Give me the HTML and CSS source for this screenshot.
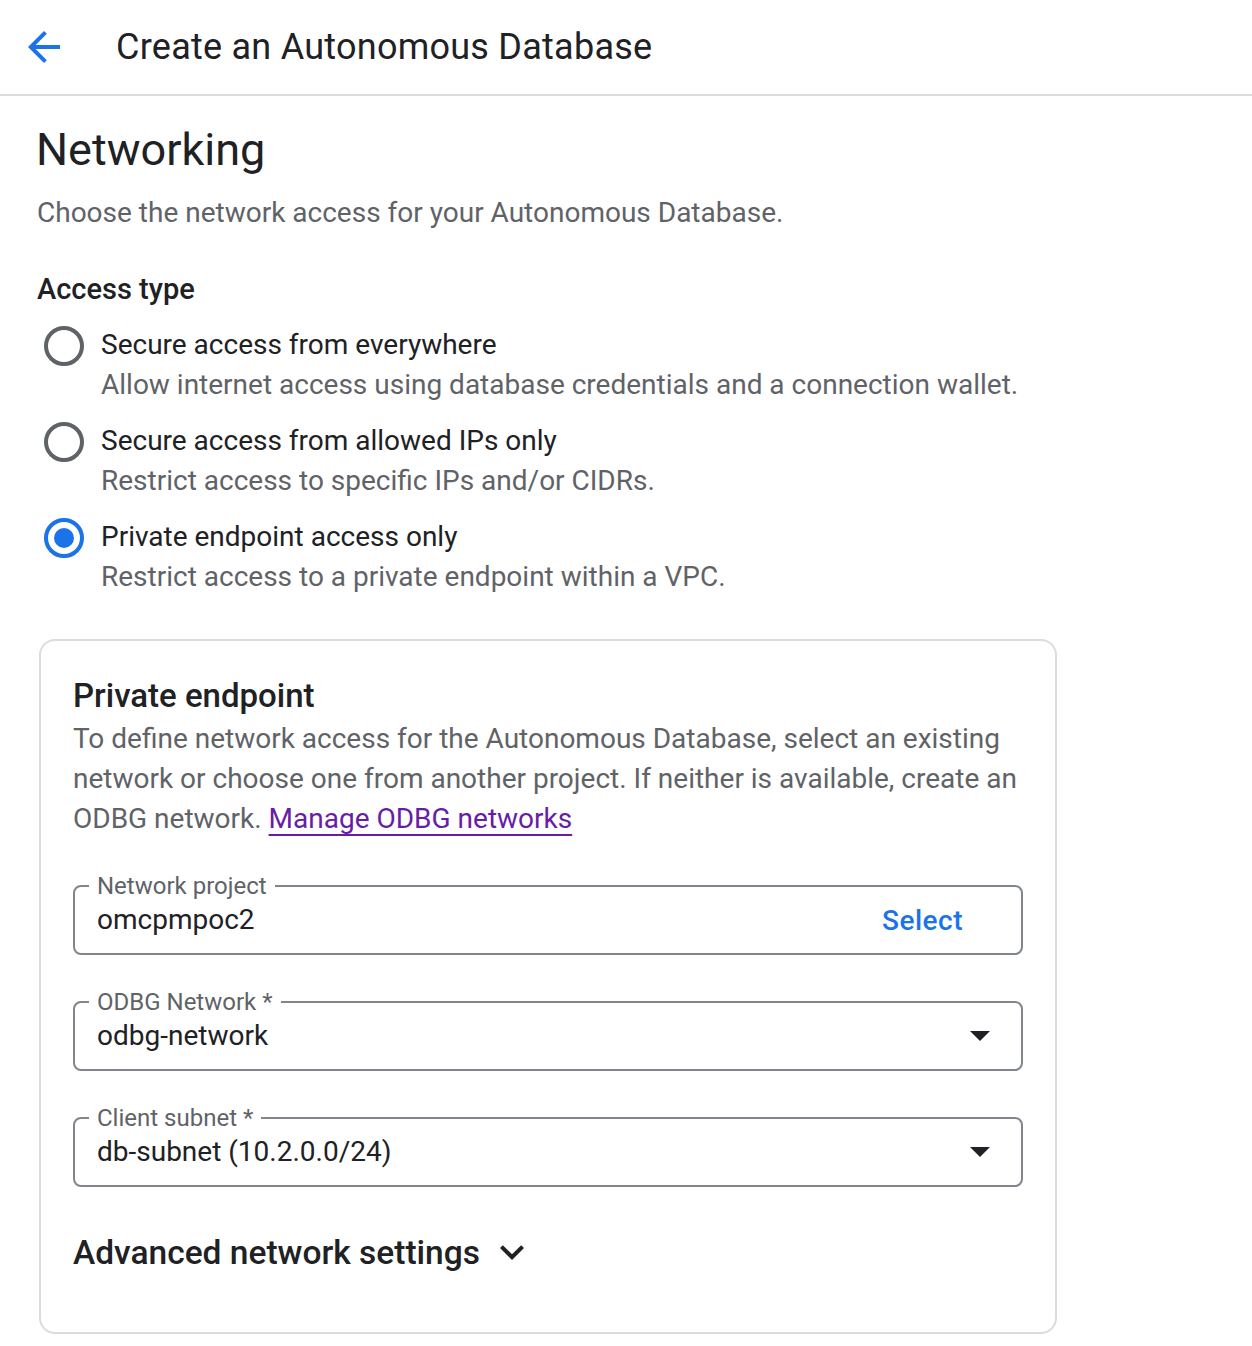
FILE: index.html
```html
<!DOCTYPE html>
<html lang="en">
<head>
<meta charset="utf-8">
<title>Create an Autonomous Database</title>
<link rel="stylesheet" href="styles.css">
</head>
<body>
<header class="topbar">
  <svg class="back" viewBox="0 0 24 24" width="48" height="48" aria-hidden="true"><path d="M20 11H7.83l5.59-5.59L12 4l-8 8 8 8 1.41-1.41L7.83 13H20v-2z"/></svg>
  <div class="page-title">Create an Autonomous Database</div>
</header>
<main class="main">
  <h1 class="section-title">Networking</h1>
  <p class="section-desc">Choose the network access for your Autonomous Database.</p>
  <div class="group-title">Access type</div>
  <div class="radios">
    <div class="option">
      <svg class="radio" viewBox="0 0 24 24" width="48" height="48"><circle cx="12" cy="12" r="9" fill="none" stroke="#5f6368" stroke-width="2"/></svg>
      <div class="option-text">
        <div class="option-label">Secure access from everywhere</div>
        <div class="option-desc">Allow internet access using database credentials and a connection wallet.</div>
      </div>
    </div>
    <div class="option">
      <svg class="radio" viewBox="0 0 24 24" width="48" height="48"><circle cx="12" cy="12" r="9" fill="none" stroke="#5f6368" stroke-width="2"/></svg>
      <div class="option-text">
        <div class="option-label">Secure access from allowed IPs only</div>
        <div class="option-desc">Restrict access to specific IPs and/or CIDRs.</div>
      </div>
    </div>
    <div class="option">
      <svg class="radio" viewBox="0 0 24 24" width="48" height="48"><circle cx="12" cy="12" r="9" fill="none" stroke="#1a73e8" stroke-width="2"/><circle cx="12" cy="12" r="5" fill="#1a73e8"/></svg>
      <div class="option-text">
        <div class="option-label">Private endpoint access only</div>
        <div class="option-desc">Restrict access to a private endpoint within a VPC.</div>
      </div>
    </div>
  </div>

  <section class="card">
    <h2 class="card-title">Private endpoint</h2>
    <p class="card-desc">To define network access for the Autonomous Database, select an existing network or choose one from another project. If neither is available, create an ODBG network. <a class="link" href="#">Manage ODBG networks</a></p>

    <fieldset class="field">
      <legend>Network project</legend>
      <div class="field-row">
        <span class="value">omcpmpoc2</span>
        <span class="select-btn">Select</span>
      </div>
    </fieldset>

    <fieldset class="field">
      <legend>ODBG Network *</legend>
      <div class="field-row">
        <span class="value">odbg-network</span>
        <svg class="caret" viewBox="0 0 20 10" width="20" height="10"><path d="M0 0h20L10 10z"/></svg>
      </div>
    </fieldset>

    <fieldset class="field">
      <legend>Client subnet *</legend>
      <div class="field-row">
        <span class="value">db-subnet (10.2.0.0/24)</span>
        <svg class="caret" viewBox="0 0 20 10" width="20" height="10"><path d="M0 0h20L10 10z"/></svg>
      </div>
    </fieldset>

    <div class="advanced">
      <span>Advanced network settings</span>
      <svg class="chev" viewBox="0 0 24 24" width="48" height="48"><path d="M16.59 8.59L12 13.17 7.41 8.59 6 10l6 6 6-6z"/></svg>
    </div>
  </section>
</main>
</body>
</html>
```

FILE: styles.css
```css
* { box-sizing: border-box; }
html, body { margin: 0; padding: 0; background: #fff; }
body {
  font-family: Roboto, "Liberation Sans", Arial, sans-serif;
  color: #202124;
  width: 1252px;
}

.topbar {
  height: 96px;
  border-bottom: 2px solid #dadce0;
  display: flex;
  align-items: center;
  padding-left: 20px;
}
.back { fill: #1a73e8; flex: none; }
.page-title {
  margin-left: 48px;
  font-size: 36px;
  line-height: 48px;
  letter-spacing: 0.25px;
  color: #202124;
  font-weight: 400;
}

.main { padding-left: 37px; }

.section-title {
  margin: 26px 0 0;
  font-size: 45px;
  line-height: 56px;
  font-weight: 400;
  color: #202124;
  margin-left: -1px;
}
.section-desc {
  margin: 15px 0 0;
  font-size: 28px;
  line-height: 40px;
  color: #5f6368;
}
.group-title {
  margin-top: 36px;
  font-size: 29px;
  line-height: 40px;
  font-weight: 500;
  color: #202124;
}

.radios {
  margin-top: 16px;
  display: flex;
  flex-direction: column;
  gap: 16px;
}
.option { display: flex; align-items: flex-start; }
.radio { flex: none; margin: -3px 13px 0 3px; }
.option-label {
  font-size: 28px;
  line-height: 40px;
  color: #202124;
}
.option-desc {
  font-size: 28px;
  line-height: 40px;
  color: #5f6368;
}

.card {
  margin: 42px 0 0 2px;
  width: 1018px;
  border: 2px solid #dadce0;
  border-radius: 16px;
  padding: 35px 32px 56px;
}
.card-title {
  margin: 0;
  font-size: 33px;
  line-height: 40px;
  font-weight: 500;
  color: #202124;
}
.card-desc {
  margin: 3px -14px 0 0;
  font-size: 28px;
  line-height: 40px;
  color: #5f6368;
}
.link {
  color: #681da8;
  text-decoration: underline;
  text-decoration-thickness: 2px;
  text-underline-offset: 6px;
}

.field {
  margin: 35px 0 0;
  border: 2px solid #80868b;
  border-radius: 8px;
  padding: 0 14px;
  min-width: 0;
}
.field legend {
  padding: 0 8px;
  font-size: 24px;
  line-height: 24px;
  color: #5f6368;
}
.field-row {
  display: flex;
  align-items: center;
  justify-content: space-between;
  height: 40px;
  margin: 2px 0 13px;
  padding-left: 8px;
}
.value {
  font-size: 28px;
  line-height: 40px;
  color: #202124;
}
.select-btn {
  font-size: 28px;
  font-weight: 500;
  color: #1a73e8;
  letter-spacing: 0.5px;
  margin-right: 44px;
}
.caret { fill: #202124; margin-right: 17px; }

.advanced {
  margin-top: 41px;
  display: flex;
  align-items: center;
  height: 48px;
  font-size: 33.5px;
  font-weight: 500;
  color: #202124;
}
.advanced span { margin-right: 8px; }
.chev { fill: #202124; }
```
